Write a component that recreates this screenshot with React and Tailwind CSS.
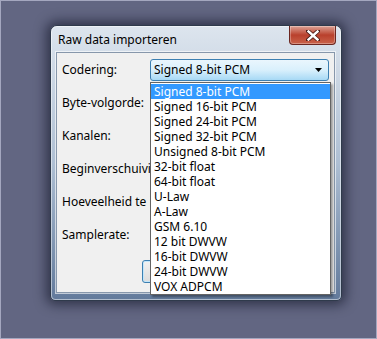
import React from 'react';

const options = [
  'Signed 8-bit PCM',
  'Signed 16-bit PCM',
  'Signed 24-bit PCM',
  'Signed 32-bit PCM',
  'Unsigned 8-bit PCM',
  '32-bit float',
  '64-bit float',
  'U-Law',
  'A-Law',
  'GSM 6.10',
  '12 bit DWVW',
  '16-bit DWVW',
  '24-bit DWVW',
  'VOX ADPCM',
];

const labels = [
  'Codering:',
  'Byte-volgorde:',
  'Kanalen:',
  'Beginverschuiving (bytes):',
  'Hoeveelheid te importeren (%):',
  'Samplerate:',
];

const font = { fontFamily: '"Noto Sans", "Open Sans", sans-serif' };

export default function App() {
  return (
    <div
      className="w-[377px] h-[339px] overflow-hidden bg-[#626682] border border-[#a4a7bf] pl-[49px] pt-[24px] text-[12px] text-black"
      style={font}
    >
      <div className="relative w-[292px] h-[276px] rounded-t-[7px] rounded-b-[5px] border border-[#2f3a4b] bg-gradient-to-b from-[#dde5ee] via-[#aebfd3] to-[#627a9b] shadow-[0_0_12px_4px_rgba(10,12,30,0.55)]">
        <div className="absolute inset-0 rounded-t-[6px] rounded-b-[4px] border border-white/50 pointer-events-none" />

        {/* title bar */}
        <div className="h-[26px] flex items-center pl-[7px] pt-[2px] text-[12px] text-black leading-none">
          Raw data importeren
        </div>

        {/* close button */}
        <div className="absolute top-[0px] right-[5px] w-[47px] h-[19px] rounded-b-[4px] border border-[#6b2620] border-t-0 bg-gradient-to-b from-[#dba195] via-[#b9402c] to-[#c9624a] flex items-center justify-center shadow-[inset_0_0_0_1px_rgba(255,255,255,0.3)]">
          <svg width="14" height="11" viewBox="0 0 14 11">
            <path
              d="M2 1 L12 10 M12 1 L2 10"
              stroke="#4a1c16"
              strokeWidth="4"
              strokeLinecap="square"
            />
            <path
              d="M2.5 1.5 L11.5 9.5 M11.5 1.5 L2.5 9.5"
              stroke="#ffffff"
              strokeWidth="2.4"
              strokeLinecap="square"
            />
          </svg>
        </div>

        {/* client area */}
        <div className="mx-[5px] w-[279px] h-[241px] border border-[#8797ab] bg-[#f0f0f0] shadow-[0_0_0_1px_rgba(255,255,255,0.6)]">
          <div className="flex flex-col gap-[11px] pt-[6px] pl-[5px]">
            {labels.map((l, i) => (
              <div key={l} className="h-[22px] flex items-center">
                <span className="w-[88px] overflow-hidden whitespace-nowrap">{l}</span>
                {i === 0 && (
                  <div className="w-[179px] h-[22px] rounded-[3px] border border-[#3c7fb1] bg-gradient-to-b from-[#eaf6fd] via-[#d9f0fc] to-[#a7d9f5] flex items-center pl-[3px] pr-[6px]">
                    <span className="flex-1">Signed 8-bit PCM</span>
                    <svg width="7" height="4" viewBox="0 0 7 4">
                      <path d="M0 0 L7 0 L3.5 4 Z" fill="#000" />
                    </svg>
                  </div>
                )}
              </div>
            ))}
          </div>
          <div className="flex pl-[85px] mt-[14px]">
            <div className="w-[75px] h-[23px] rounded-[3px] border border-[#3c7fb1] bg-gradient-to-b from-[#f2f2f2] to-[#dcdcdc] shadow-[inset_0_0_0_1px_rgba(190,230,253,0.9)]" />
          </div>
        </div>

        {/* open dropdown list */}
        <div className="absolute left-[99px] top-[56px] w-[181px] h-[213px] border border-[#646464] bg-white shadow-[2px_2px_2px_rgba(0,0,0,0.35)] pt-[1px]">
          {options.map((o, i) => (
            <div
              key={o}
              className={`h-[15px] leading-[15px] pl-[3px] whitespace-nowrap ${
                i === 0 ? 'bg-[#3399ff] text-white' : 'text-black'
              }`}
            >
              {o}
            </div>
          ))}
        </div>
      </div>
    </div>
  );
}
